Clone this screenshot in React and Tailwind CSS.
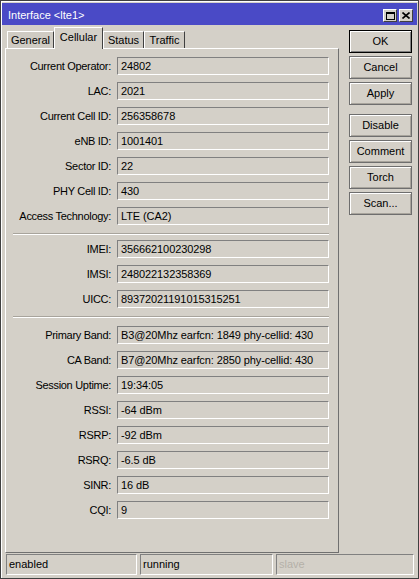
import React from "react";

const groups = [
  [
    ["Current Operator", "24802"],
    ["LAC", "2021"],
    ["Current Cell ID", "256358678"],
    ["eNB ID", "1001401"],
    ["Sector ID", "22"],
    ["PHY Cell ID", "430"],
    ["Access Technology", "LTE (CA2)"],
  ],
  [
    ["IMEI", "356662100230298"],
    ["IMSI", "248022132358369"],
    ["UICC", "89372021191015315251"],
  ],
  [
    ["Primary Band", "B3@20Mhz earfcn: 1849 phy-cellid: 430"],
    ["CA Band", "B7@20Mhz earfcn: 2850 phy-cellid: 430"],
    ["Session Uptime", "19:34:05"],
    ["RSSI", "-64 dBm"],
    ["RSRP", "-92 dBm"],
    ["RSRQ", "-6.5 dB"],
    ["SINR", "16 dB"],
    ["CQI", "9"],
  ],
];

function Field({ label, value }) {
  return (
    <div className="flex items-center h-[18px]">
      <div className="w-[105px] text-right tracking-[-0.3px] whitespace-nowrap">{label}:</div>
      <div className="ml-[6px] w-[212px] h-[18px] border border-t-[#808080] border-l-[#808080] border-b-white border-r-white flex items-center pl-[3px] whitespace-nowrap overflow-hidden tracking-[-0.1px]">
        {value}
      </div>
    </div>
  );
}

function Separator() {
  return <div className="ml-[7px] w-[316px] h-[2px] border-t border-t-[#a8a49c] border-b border-b-white" />;
}

function Button({ children, primary }) {
  return (
    <div
      className={
        "h-[23px] w-[63px] flex items-center justify-center border " +
        (primary
          ? "border-black shadow-[inset_1px_1px_0_#fff,inset_-1px_-1px_0_#808080]"
          : "border-[#6e6e6e] shadow-[inset_1px_1px_0_#fff,inset_-1px_-1px_0_#a8a49c]")
      }
    >
      {children}
    </div>
  );
}

function Tab({ children, active, w }) {
  if (active) {
    return (
      <div
        className={`${w} h-[22px] -mb-px relative z-10 bg-[#d4d0c8] border-t border-l border-t-white border-l-white border-r border-r-[#404040] flex items-start justify-center pt-[4px]`}
      >
        {children}
      </div>
    );
  }
  return (
    <div
      className={`${w} h-[17px] bg-[#cfcbc3] border-t border-l border-t-white border-l-white border-r border-r-[#404040] flex items-start justify-center pt-[3px]`}
    >
      {children}
    </div>
  );
}

export default function App() {
  return (
    <div
      className="w-[419px] h-[579px] bg-[#d4d0c8] border border-[#404040] shadow-[inset_1px_1px_0_#fff] p-px flex flex-col text-[11px] text-black leading-none"
      style={{ fontFamily: "'Liberation Sans', Arial, sans-serif" }}
    >
      {/* title bar */}
      <div className="mt-px h-[22px] bg-[#4a4ac6] flex items-center justify-between pl-[6px] pr-[4px] pt-[3px]">
        <span className="text-white text-[11px]">Interface &lt;lte1&gt;</span>
        <div className="flex gap-[2px] items-center">
          <div className="w-[14px] h-[13px] bg-[#d4d0c8] border border-t-white border-l-white border-b-[#404040] border-r-[#404040] flex items-center justify-center">
            <div className="w-[9px] h-[8px] border border-black border-t-2" />
          </div>
          <div className="w-[14px] h-[13px] bg-[#d4d0c8] border border-t-white border-l-white border-b-[#404040] border-r-[#404040] flex items-center justify-center">
            <svg width="8" height="7" viewBox="0 0 8 7">
              <path d="M0.5 0.5 L7.5 6.5 M7.5 0.5 L0.5 6.5" stroke="#000" strokeWidth="1.6" />
            </svg>
          </div>
        </div>
      </div>

      <div className="flex h-[528px]">
        {/* tabs and panel */}
        <div className="pl-[3px] w-[337px] flex flex-col">
          <div className="h-[23px] flex items-end pl-[2px]">
            <Tab w="w-[47px]">General</Tab>
            <Tab w="w-[49px]" active>
              Cellular
            </Tab>
            <Tab w="w-[41px]">Status</Tab>
            <Tab w="w-[41px]">Traffic</Tab>
          </div>
          <div className="h-[505px] border border-t-white border-l-white border-r-[#707070] border-b-[#707070] pt-[8px] flex flex-col">
            <div className="flex flex-col gap-[7px]">
              {groups[0].map(([l, v]) => (
                <Field key={l} label={l} value={v} />
              ))}
            </div>
            <div className="mt-[8px] mb-[5px]">
              <Separator />
            </div>
            <div className="flex flex-col gap-[7px]">
              {groups[1].map(([l, v]) => (
                <Field key={l} label={l} value={v} />
              ))}
            </div>
            <div className="mt-[8px] mb-[8px]">
              <Separator />
            </div>
            <div className="flex flex-col gap-[7px]">
              {groups[2].map(([l, v]) => (
                <Field key={l} label={l} value={v} />
              ))}
            </div>
          </div>
        </div>

        {/* command buttons */}
        <div className="ml-[10px] pt-[5px] flex flex-col gap-[3px]">
          <Button primary>OK</Button>
          <Button>Cancel</Button>
          <Button>Apply</Button>
          <div className="h-[3px]" />
          <Button>Disable</Button>
          <Button>Comment</Button>
          <Button>Torch</Button>
          <Button>Scan...</Button>
        </div>
      </div>

      {/* status bar */}
      <div className="mt-[1px] h-[21px] flex pl-[4px] gap-[3px]">
        <div className="w-[131px] h-full border border-t-[#808080] border-l-[#808080] border-b-white border-r-white flex items-center pl-[2px]">
          enabled
        </div>
        <div className="w-[133px] h-full border border-t-[#808080] border-l-[#808080] border-b-white border-r-white flex items-center pl-[2px]">
          running
        </div>
        <div className="w-[138px] h-full border border-t-[#808080] border-l-[#808080] border-b-white border-r-white flex items-center pl-[2px] text-[#b4b0a8]">
          slave
        </div>
      </div>
    </div>
  );
}
